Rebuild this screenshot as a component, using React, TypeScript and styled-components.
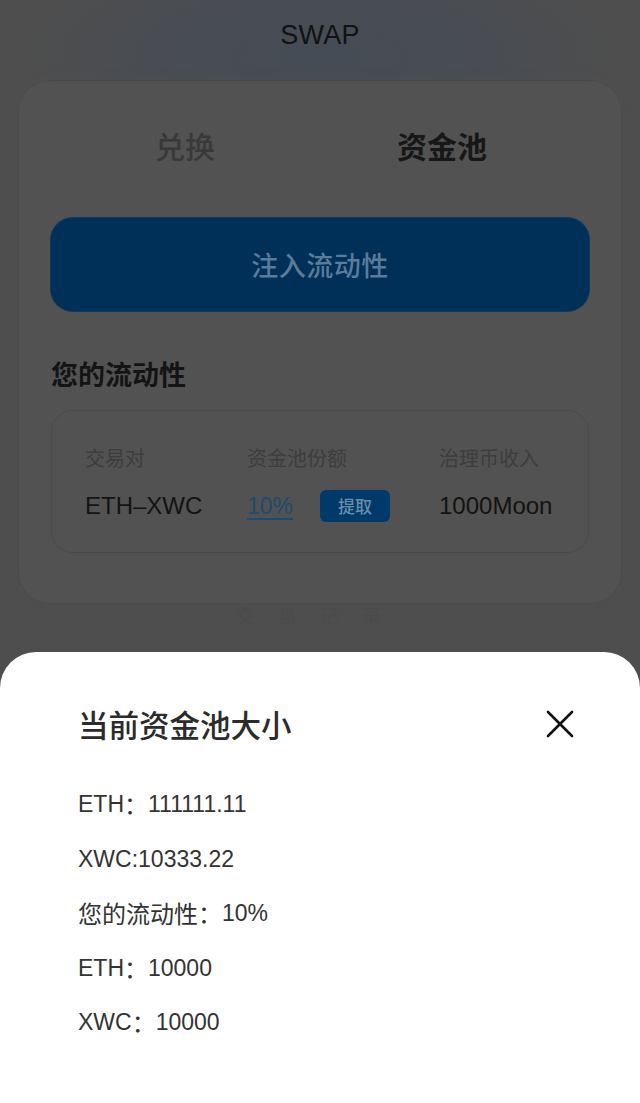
import React from "react";
import styled, { createGlobalStyle } from "styled-components";

const Global = createGlobalStyle`
  html, body { margin: 0; padding: 0; }
  body {
    background: #4e4e4e;
    font-family: "Liberation Sans", "Noto Sans CJK SC", sans-serif;
    overflow: hidden;
  }
`;

const Page = styled.div`
  width: 640px;
  height: 1103px;
  position: relative;
  overflow: hidden;
  background:
    radial-gradient(ellipse 300px 110px at 50% 55px, #454b55 0%, #494d53 55%, rgba(78,78,78,0) 100%),
    #4e4e4e;
  display: flex;
  flex-direction: column;
  align-items: center;
`;

const Header = styled.header`
  height: 70px;
  width: 100%;
  display: flex;
  align-items: center;
  justify-content: center;
  font-size: 27px;
  color: #121212;
  letter-spacing: 0.2px;
`;

const Card = styled.section`
  margin-top: 10px;
  width: 604px;
  box-sizing: border-box;
  background: #525252;
  border: 1px solid #4b4b4b;
  border-radius: 32px;
  box-shadow: 0 -2px 10px rgba(120, 120, 120, 0.08);
  padding: 44px 32px 50px;
  display: flex;
  flex-direction: column;
`;

const Tabs = styled.div`
  display: grid;
  grid-template-columns: 268px 246px;
  height: 40px;
`;

const Tab = styled.div<{ $active?: boolean }>`
  font-family: "Noto Sans CJK SC", sans-serif;
  font-size: 30px;
  line-height: 40px;
  text-align: center;
  font-weight: ${(p) => (p.$active ? 700 : 500)};
  color: ${(p) => (p.$active ? "#171717" : "#393939")};
`;

const PrimaryButton = styled.button`
  margin-top: 53px;
  height: 93px;
  border: none;
  border-radius: 22px;
  background: #002f57;
  box-shadow: 0 0 0 1px #0a3b63;
  color: #5a7c9a;
  font-family: "Noto Sans CJK SC", sans-serif;
  font-size: 27px;
  font-weight: 500;
  letter-spacing: 0.5px;
  cursor: pointer;
`;

const SectionTitle = styled.h2`
  margin: 45px 0 0;
  font-family: "Noto Sans CJK SC", sans-serif;
  font-size: 27px;
  line-height: 36px;
  font-weight: 700;
  color: #141414;
`;

const Table = styled.div`
  margin-top: 18px;
  border: 1px solid #4b4b4b;
  border-radius: 22px;
  padding: 32px 0 31px 33px;
  display: grid;
  grid-template-columns: 162px 192px 1fr;
  row-gap: 18px;
`;

const Label = styled.div`
  font-family: "Noto Sans CJK SC", sans-serif;
  font-size: 20px;
  line-height: 30px;
  color: #3d3d3d;
`;

const Value = styled.div`
  font-size: 24px;
  line-height: 30px;
  height: 30px;
  color: #131313;
  display: flex;
  align-items: center;
`;

const ShareLink = styled.span`
  color: #1f4a70;
  font-size: 23px;
  text-decoration: underline;
  text-decoration-thickness: 2px;
  text-underline-offset: 4px;
  width: 73px;
`;

const SmallButton = styled.span`
  display: inline-flex;
  align-items: center;
  justify-content: center;
  width: 70px;
  height: 32px;
  border-radius: 6px;
  background: #003a6b;
  color: #6b8caa;
  font-family: "Noto Sans CJK SC", sans-serif;
  font-size: 17px;
  font-weight: 500;
`;

const Ghost = styled.div`
  margin-top: 0;
  line-height: 22px;
  text-align: center;
  font-family: "Noto Sans CJK SC", sans-serif;
  font-size: 18px;
  letter-spacing: 24px;
  color: #4b4b4b;
`;

const Sheet = styled.div`
  position: absolute;
  left: 0;
  right: 0;
  bottom: 0;
  height: 451px;
  background: #ffffff;
  border-radius: 36px 36px 0 0;
  box-sizing: border-box;
  padding: 52px 66px 0 78px;
  display: flex;
  flex-direction: column;
`;

const SheetHead = styled.div`
  display: flex;
  align-items: center;
  justify-content: space-between;
  height: 40px;
`;

const SheetTitle = styled.h3`
  margin: 0;
  font-family: "Noto Sans CJK SC", sans-serif;
  font-size: 30.5px;
  line-height: 40px;
  font-weight: 500;
  color: #2b2b2b;
`;

const Close = styled.button`
  width: 28px;
  height: 28px;
  padding: 0;
  border: none;
  background: none;
  display: flex;
  cursor: pointer;
`;

const Rows = styled.div`
  margin-top: 45px;
  display: flex;
  flex-direction: column;
  gap: 24.5px;
`;

const Row = styled.div`
  font-family: "Liberation Sans", "Noto Sans CJK SC", sans-serif;
  font-size: 23px;
  line-height: 30px;
  height: 30px;
  display: flex;
  align-items: center;
  white-space: pre;
  color: #333333;
`;

const Cjk = styled.span`
  font-family: "Noto Sans CJK SC", sans-serif;
  font-size: 24px;
  line-height: 30px;
`;

export default function App() {
  return (
    <>
      <Global />
      <Page>
        <Header>SWAP</Header>
        <Card>
          <Tabs>
            <Tab>兑换</Tab>
            <Tab $active>资金池</Tab>
          </Tabs>
          <PrimaryButton>注入流动性</PrimaryButton>
          <SectionTitle>您的流动性</SectionTitle>
          <Table>
            <Label>交易对</Label>
            <Label>资金池份额</Label>
            <Label>治理币收入</Label>
            <Value>ETH–XWC</Value>
            <Value>
              <ShareLink>10%</ShareLink>
              <SmallButton>提取</SmallButton>
            </Value>
            <Value>1000Moon</Value>
          </Table>
        </Card>
        <Ghost>交易记录</Ghost>
        <Sheet>
          <SheetHead>
            <SheetTitle>当前资金池大小</SheetTitle>
            <Close aria-label="关闭">
              <svg width="28" height="28" viewBox="0 0 28 28">
                <path d="M2 2 L26 26 M26 2 L2 26" stroke="#111" strokeWidth="2.6" strokeLinecap="round" fill="none" />
              </svg>
            </Close>
          </SheetHead>
          <Rows>
            <Row>ETH<Cjk>：</Cjk>111111.11</Row>
            <Row>XWC:10333.22</Row>
            <Row><Cjk>您的流动性：</Cjk>10%</Row>
            <Row>ETH<Cjk>：</Cjk>10000</Row>
            <Row>XWC<Cjk>：</Cjk>10000</Row>
          </Rows>
        </Sheet>
      </Page>
    </>
  );
}
